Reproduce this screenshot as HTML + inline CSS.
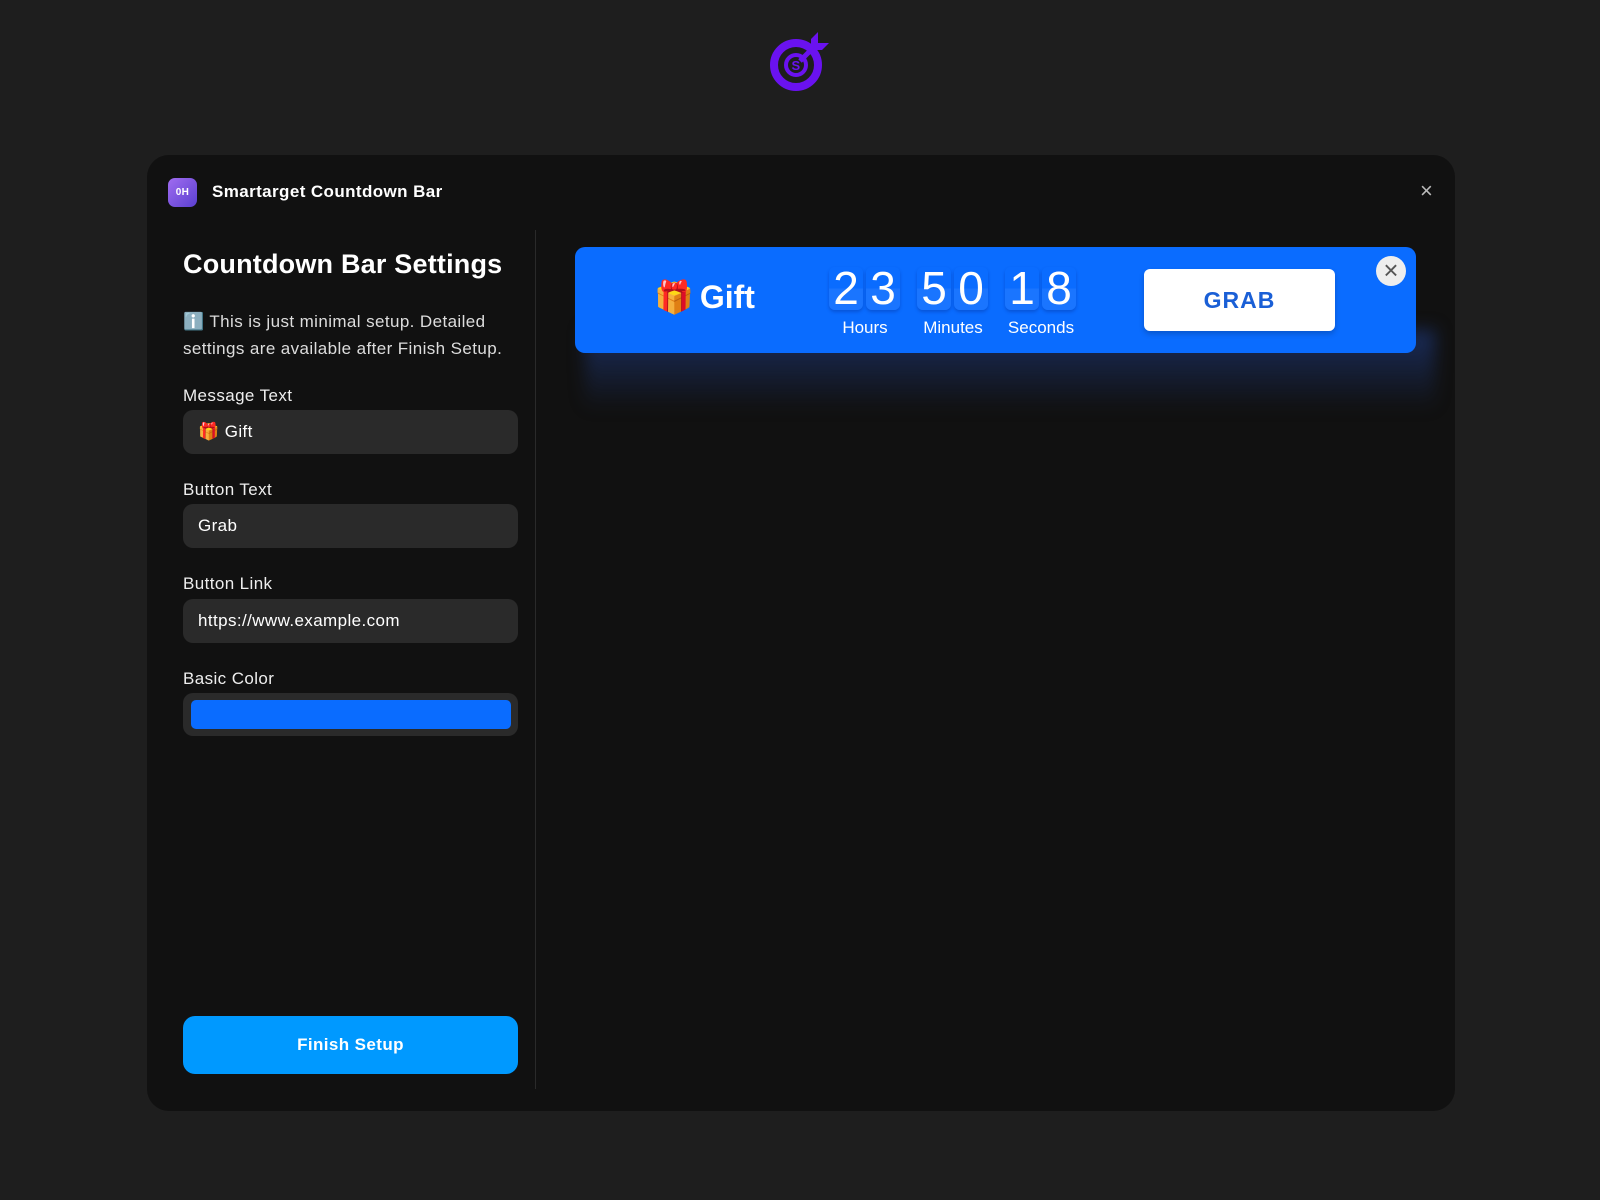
<!DOCTYPE html>
<html><head><meta charset="utf-8"><style>
*{box-sizing:border-box;margin:0;padding:0}
body{width:1600px;height:1200px;background:#1e1e1e;font-family:"Liberation Sans","Noto Sans CJK SC",sans-serif;color:#fff;position:relative;overflow:hidden;letter-spacing:0.4px}
.abs{position:absolute}
.modal{left:147px;top:155px;width:1308px;height:956px;background:#111;border-radius:22px}
.lbl{position:absolute;left:183px;font-size:17px;color:#eee}
.inp{position:absolute;left:183px;width:335px;height:44px;background:#2a2a2a;border-radius:10px;font-size:17px;color:#fff;padding-left:15px;line-height:44px}
.dg{position:absolute;top:267px;width:34px;height:43px;background:linear-gradient(#0a6cff 50%,#1a75ff 50%);border-radius:6px;font-size:46px;line-height:43px;text-align:center;color:#fff;box-shadow:0 2px 3px rgba(0,40,140,.35);letter-spacing:0}
.ul{position:absolute;top:318px;font-size:17px;color:#fff;text-align:center;width:90px;letter-spacing:0}
</style></head><body>
<svg class="abs" style="left:766px;top:28px" width="66" height="66" viewBox="0 0 66 66">
<circle cx="30" cy="37" r="22" fill="none" stroke="#6a12f0" stroke-width="8"/>
<circle cx="30" cy="37" r="10" fill="none" stroke="#6a12f0" stroke-width="4"/>
<text x="30" y="42" font-size="13" font-weight="bold" fill="#6a12f0" text-anchor="middle" font-family="Liberation Sans">S</text>
<path d="M34 33 L52 15" stroke="#6a12f0" stroke-width="5"/>
<path d="M52 4 L52 15 L63 15 L56 22 L45 22 L45 11 Z" fill="#6a12f0"/>
</svg>
<div class="abs modal"></div>
<div class="abs" style="left:168px;top:178px;width:29px;height:29px;border-radius:7px;background:linear-gradient(135deg,#a06cf0,#5a3fd0);font-size:10px;font-weight:bold;text-align:center;line-height:29px">0H</div>
<div class="abs" style="left:212px;top:182px;font-size:17px;font-weight:bold">Smartarget Countdown Bar</div>
<div class="abs" style="left:1420px;top:178px;font-size:22px;color:#bbb">×</div>
<div class="abs" style="left:535px;top:230px;width:1px;height:859px;background:#2a2a2a"></div>
<div class="abs" style="left:183px;top:249px;font-size:27px;font-weight:bold;letter-spacing:0.2px">Countdown Bar Settings</div>
<div class="abs" style="left:183px;top:308px;font-size:17px;line-height:27px;color:#ddd;width:350px">ℹ️ This is just minimal setup. Detailed settings are available after Finish Setup.</div>
<div class="lbl" style="top:386px">Message Text</div>
<div class="inp" style="top:410px">🎁 Gift</div>
<div class="lbl" style="top:480px">Button Text</div>
<div class="inp" style="top:504px">Grab</div>
<div class="lbl" style="top:574px">Button Link</div>
<div class="inp" style="top:599px">https://www.example.com</div>
<div class="lbl" style="top:669px">Basic Color</div>
<div class="inp" style="top:693px;height:43px;padding:0"></div>
<div class="abs" style="left:191px;top:700px;width:320px;height:29px;background:#0a6cff;border-radius:5px"></div>
<div class="abs" style="left:183px;top:1016px;width:335px;height:58px;background:#0099ff;border-radius:12px;font-size:17px;font-weight:bold;text-align:center;line-height:58px">Finish Setup</div>
<div class="abs" style="left:585px;top:330px;width:850px;height:80px;background:linear-gradient(#1a2c5a,rgba(17,17,17,0));filter:blur(8px)"></div>
<div class="abs" style="left:575px;top:247px;width:841px;height:106px;background:#0a6cff;border-radius:10px"></div>
<div class="abs" style="left:654px;top:278px;font-size:32px;font-weight:bold;letter-spacing:0">🎁<span style="margin-left:6px">Gift</span></div>
<div class="dg" style="left:829px">2</div><div class="dg" style="left:866px">3</div>
<div class="dg" style="left:917px">5</div><div class="dg" style="left:954px">0</div>
<div class="dg" style="left:1005px">1</div><div class="dg" style="left:1042px">8</div>
<div class="ul" style="left:820px">Hours</div>
<div class="ul" style="left:908px">Minutes</div>
<div class="ul" style="left:996px">Seconds</div>
<div class="abs" style="left:1144px;top:269px;width:191px;height:62px;background:#fff;border-radius:6px;color:#1a5fd6;font-size:23px;font-weight:bold;text-align:center;line-height:62px;box-shadow:0 3px 6px rgba(0,0,0,.2);letter-spacing:1px">GRAB</div>
<div class="abs" style="left:1376px;top:256px;width:30px;height:30px;border-radius:50%;background:#eee;color:#555;font-size:26px;text-align:center;line-height:29px;letter-spacing:0">×</div>
</body></html>
